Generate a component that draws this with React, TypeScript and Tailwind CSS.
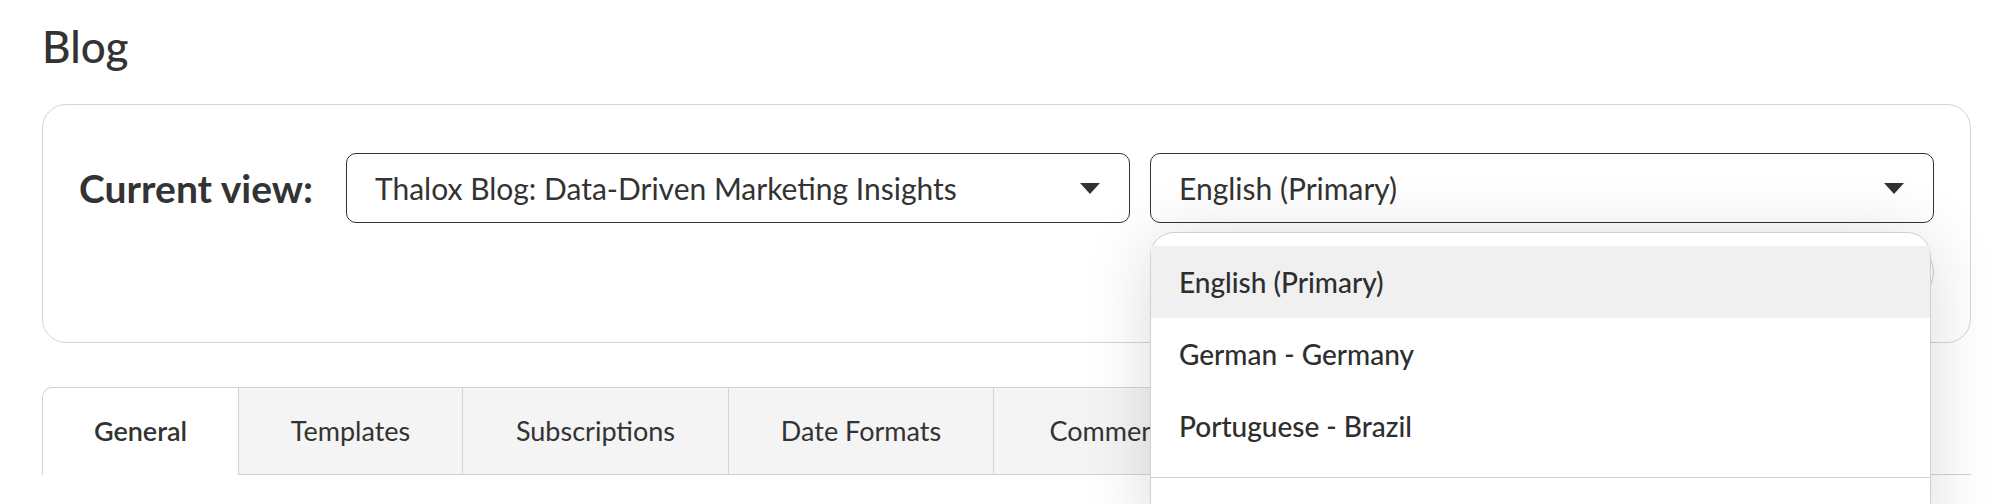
import { ReactNode } from 'react';

interface Tab {
  label: string;
  width: string;
  active?: boolean;
}

const tabs: Tab[] = [
  { label: 'General', width: 'w-[197px]', active: true },
  { label: 'Templates', width: 'w-[224px]' },
  { label: 'Subscriptions', width: 'w-[266px]' },
  { label: 'Date Formats', width: 'w-[265px]' },
  { label: 'Comments', width: 'w-[240px]' },
];

const languages = ['English (Primary)', 'German - Germany', 'Portuguese - Brazil'];

const Caret = () => (
  <svg width="20" height="11" viewBox="0 0 20 11" className="shrink-0">
    <polygon points="0,0 20,0 10,11" fill="#333333" />
  </svg>
);

const SelectBox = ({ children }: { children: ReactNode }) => (
  <div className="flex h-[70px] items-center justify-between rounded-[10px] border border-[#333333] bg-white pl-[28px] pr-[29px]">
    <span className="truncate text-[30px] text-[#333333]">{children}</span>
    <Caret />
  </div>
);

const App = () => {
  return (
    <div className="h-[504px] overflow-hidden bg-white pl-[42px] pr-[21px] font-[Lato,sans-serif] text-[#333333]">
      <h1 className="pt-[21px] text-[44px] leading-[50px] font-medium">Blog</h1>

      {/* view switcher */}
      <div className="mt-[33px] rounded-[24px] border border-[#d4d4d4] bg-white px-[36px] pt-[48px] pb-[40px]">
        <div className="flex items-center">
          <div className="w-[267px] shrink-0 text-[39px] font-bold">Current view:</div>
          <div className="flex flex-1 gap-[20px]">
            <div className="flex-1">
              <SelectBox>Thalox Blog: Data-Driven Marketing Insights</SelectBox>
            </div>
            <div className="relative flex-1">
              <SelectBox>English (Primary)</SelectBox>
              <div className="absolute top-[79px] right-[3px] left-0 z-10 rounded-t-[24px] border border-[#d0d0d0] bg-white pt-[13px] shadow-[0_6px_70px_rgba(0,0,0,0.14)]">
                {languages.map((lang, i) => (
                  <div
                    key={lang}
                    className={`flex h-[72px] items-center px-[28px] text-[28px] font-medium text-[#2e2e2e] ${
                      i === 0 ? 'bg-[#f0f0f0]' : ''
                    }`}
                  >
                    {lang}
                  </div>
                ))}
                <div className="mt-[15px] h-[60px] border-t border-[#d0d0d0]" />
              </div>
            </div>
          </div>
        </div>
        <div className="mt-[19px] flex justify-end">
          <button className="h-[60px] w-[260px] rounded-full border border-[#cfcfcf] bg-white text-[26px] text-[#333333]">
            Edit view
          </button>
        </div>
      </div>

      {/* settings tabs */}
      <div className="mt-[44px] flex">
        {tabs.map((tab) => (
          <div
            key={tab.label}
            className={
              tab.active
                ? `${tab.width} flex h-[88px] shrink-0 items-center justify-center rounded-tl-[10px] border-t border-r border-l border-[#d3d3d3] bg-white text-[27px] font-semibold`
                : `${tab.width} flex h-[88px] shrink-0 items-center justify-center border-t border-r border-b border-[#d3d3d3] bg-[#f4f4f4] text-[27px]`
            }
          >
            {tab.label}
          </div>
        ))}
        <div className="h-[88px] flex-1 border-b border-[#d3d3d3]" />
      </div>
    </div>
  );
};

export default App;
